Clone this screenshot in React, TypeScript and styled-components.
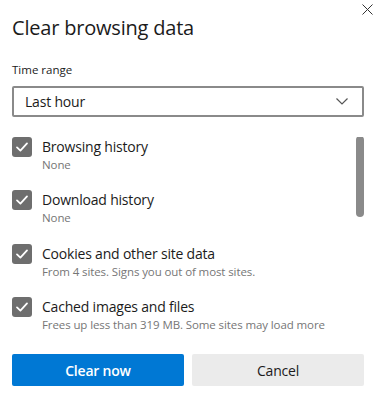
import styled, { createGlobalStyle } from "styled-components";

type Item = {
  title: string;
  detail: string;
};

const items: Item[] = [
  { title: "Browsing history", detail: "None" },
  { title: "Download history", detail: "None" },
  { title: "Cookies and other site data", detail: "From 4 sites. Signs you out of most sites." },
  { title: "Cached images and files", detail: "Frees up less than 319 MB. Some sites may load more" },
];

const GlobalStyle = createGlobalStyle`
  html, body {
    margin: 0;
    padding: 0;
    background: #ffffff;
  }
  body {
    font-family: "Open Sans", "Noto Sans", sans-serif;
    color: #1b1b1b;
  }
`;

const Dialog = styled.div`
  width: 380px;
  height: 396px;
  box-sizing: border-box;
  padding: 0 16px 0 12px;
  display: flex;
  flex-direction: column;
  background: #ffffff;
  overflow: hidden;
`;

const Header = styled.div`
  display: flex;
  justify-content: space-between;
  align-items: flex-start;
`;

const Title = styled.h1`
  margin: 14px 0 0;
  font-size: 20px;
  line-height: 28px;
  font-weight: 400;
  letter-spacing: -0.2px;
  color: #1b1b1b;
`;

const Close = styled.button`
  margin: 4px -9px 0 0;
  padding: 0;
  width: 11px;
  height: 11px;
  border: none;
  background: none;
  display: flex;
`;

const Label = styled.div`
  margin-top: 20px;
  font-size: 11.5px;
  line-height: 16px;
  color: #1b1b1b;
`;

const Select = styled.div`
  margin-top: 8px;
  height: 31px;
  box-sizing: border-box;
  border: 2px solid #8a8a8a;
  border-radius: 2px;
  display: flex;
  align-items: center;
  justify-content: space-between;
  padding: 0 14px 0 11px;
  font-size: 14px;
  letter-spacing: -0.2px;
  color: #1b1b1b;
`;

const Body = styled.div`
  margin-top: 20px;
  display: flex;
  height: 210px;
  overflow: hidden;
`;

const List = styled.div`
  flex: 1;
  display: flex;
  flex-direction: column;
  gap: 17.3px;
`;

const Track = styled.div`
  width: 8px;
  flex-shrink: 0;
`;

const Thumb = styled.div`
  width: 8px;
  height: 81px;
  margin-top: -1px;
  border-radius: 4px;
  background: #8a8a8a;
`;

const Row = styled.label`
  display: flex;
  align-items: flex-start;
  gap: 10px;
`;

const Box = styled.span`
  width: 20px;
  height: 20px;
  flex-shrink: 0;
  border-radius: 3px;
  background: #6e6e6e;
  display: flex;
  align-items: center;
  justify-content: center;
`;

const Texts = styled.div`
  display: flex;
  flex-direction: column;
`;

const ItemTitle = styled.span`
  font-size: 14px;
  line-height: 20px;
  letter-spacing: -0.2px;
  color: #1b1b1b;
`;

const ItemDetail = styled.span`
  font-size: 11.5px;
  line-height: 16px;
  letter-spacing: -0.1px;
  color: #767676;
  white-space: nowrap;
`;

const Actions = styled.div`
  margin-top: 7px;
  display: grid;
  grid-template-columns: 1fr 1fr;
  gap: 8px;
`;

const Button = styled.button<{ $primary?: boolean }>`
  height: 32px;
  border: none;
  border-radius: 2px;
  font-family: inherit;
  font-size: 14px;
  letter-spacing: -0.2px;
  font-weight: ${(p) => (p.$primary ? 600 : 400)};
  background: ${(p) => (p.$primary ? "#0078d4" : "#ebebeb")};
  color: ${(p) => (p.$primary ? "#ffffff" : "#1b1b1b")};
`;

function Check() {
  return (
    <svg width="14" height="14" viewBox="0 0 14 14" fill="none">
      <path d="M2 7.4 L5.4 10.6 L12 3.4" stroke="#ffffff" strokeWidth="1.8" strokeLinecap="round" strokeLinejoin="round" />
    </svg>
  );
}

export default function App() {
  return (
    <>
      <GlobalStyle />
      <Dialog>
        <Header>
          <Title>Clear browsing data</Title>
          <Close aria-label="Close">
            <svg width="11" height="11" viewBox="0 0 11 11">
              <path d="M0.5 0.5 L10.5 10.5 M10.5 0.5 L0.5 10.5" stroke="#333" strokeWidth="1" />
            </svg>
          </Close>
        </Header>
        <Label>Time range</Label>
        <Select>
          <span>Last hour</span>
          <svg width="12" height="7" viewBox="0 0 12 7" fill="none">
            <path d="M0.5 0.5 L6 6 L11.5 0.5" stroke="#555" strokeWidth="1.2" />
          </svg>
        </Select>
        <Body>
          <List>
            {items.map((it) => (
              <Row key={it.title}>
                <Box>
                  <Check />
                </Box>
                <Texts>
                  <ItemTitle>{it.title}</ItemTitle>
                  <ItemDetail>{it.detail}</ItemDetail>
                </Texts>
              </Row>
            ))}
          </List>
          <Track>
            <Thumb />
          </Track>
        </Body>
        <Actions>
          <Button $primary>Clear now</Button>
          <Button>Cancel</Button>
        </Actions>
      </Dialog>
    </>
  );
}
